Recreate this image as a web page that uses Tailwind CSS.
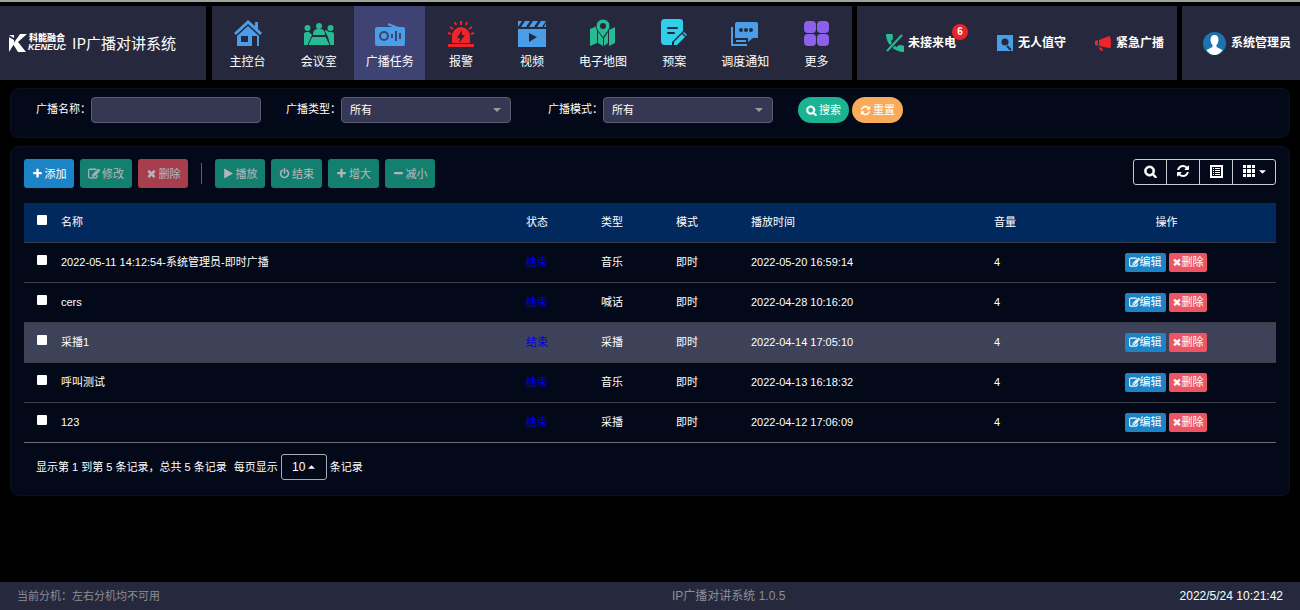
<!DOCTYPE html>
<html lang="zh-CN">
<head>
<meta charset="utf-8">
<title>IP广播对讲系统</title>
<script src="https://cdn.jsdelivr.net/npm/@tailwindcss/browser@4"></script>
</head>
<body class="flex min-h-screen flex-col border-t-2 border-[#9aa5a3] bg-black font-['Liberation_Sans','Noto_Sans_CJK_SC',sans-serif] text-[11px] leading-4 text-white">

<svg class="hidden" aria-hidden="true">
  <symbol id="search" viewBox="0 0 1792 1792"><path d="M1216 832q0-185-131.5-316.5t-316.5-131.5-316.5 131.5-131.5 316.5 131.5 316.5 316.5 131.5 316.5-131.5 131.5-316.5zm512 832q0 52-38 90t-90 38q-54 0-90-38l-343-342q-179 124-399 124-143 0-273.5-55.5t-225-150-150-225-55.5-273.5 55.5-273.5 150-225 225-150 273.5-55.5 273.5 55.5 225 150 150 225 55.5 273.5q0 220-124 399l343 343q37 37 37 90z" stroke="currentColor" stroke-width="90"/></symbol>
  <symbol id="plus" viewBox="0 0 1792 1792"><path d="M1600 736v192q0 40-28 68t-68 28h-416v416q0 40-28 68t-68 28h-192q-40 0-68-28t-28-68v-416h-416q-40 0-68-28t-28-68v-192q0-40 28-68t68-28h416v-416q0-40 28-68t68-28h192q40 0 68 28t28 68v416h416q40 0 68 28t28 68z"/></symbol>
  <symbol id="minus" viewBox="0 0 1792 1792"><path d="M1600 736v192q0 40-28 68t-68 28h-1216q-40 0-68-28t-28-68v-192q0-40 28-68t68-28h1216q40 0 68 28t28 68z"/></symbol>
  <symbol id="times" viewBox="0 0 1792 1792"><path d="M1490 1322q0 40-28 68l-136 136q-28 28-68 28t-68-28l-294-294-294 294q-28 28-68 28t-68-28l-136-136q-28-28-28-68t28-68l294-294-294-294q-28-28-28-68t28-68l136-136q28-28 68-28t68 28l294 294 294-294q28-28 68-28t68 28l136 136q28 28 28 68t-28 68l-294 294 294 294q28 28 28 68z" stroke="currentColor" stroke-width="90"/></symbol>
  <symbol id="refresh" viewBox="0 0 1792 1792"><path d="M1639 1056q0 5-1 7-64 268-268 434.5t-478 166.5q-146 0-282.5-55t-243.5-157l-129 129q-19 19-45 19t-45-19-19-45v-448q0-26 19-45t45-19h448q26 0 45 19t19 45-19 45l-137 137q71 66 161 102t187 36q134 0 250-65t186-179q11-17 53-117 8-23 30-23h192q13 0 22.5 9.5t9.5 22.5zm25-800v448q0 26-19 45t-45 19h-448q-26 0-45-19t-19-45 19-45l138-138q-148-137-349-137-134 0-250 65t-186 179q-11 17-53 117-8 23-30 23h-199q-13 0-22.5-9.5t-9.5-22.5v-7q65-268 270-434.5t480-166.5q146 0 284 55.5t245 156.5l130-129q19-19 45-19t45 19 19 45z"/></symbol>
  <symbol id="play" viewBox="0 0 1792 1792"><path d="M1576 927l-1328 738q-23 13-39.5 3t-16.5-36v-1472q0-26 16.5-36t39.5 3l1328 738q23 13 23 31t-23 31z"/></symbol>
  <symbol id="power" viewBox="0 0 1792 1792"><path d="M1664 896q0 156-61 298t-164 245-245 164-298 61-298-61-245-164-164-245-61-298q0-182 80.5-343t226.5-270q43-32 95.5-25t83.5 50q32 42 24.5 94.5t-49.5 84.5q-98 74-151.5 181t-53.5 228q0 104 40.5 198.5t109.5 163.5 163.5 109.5 198.5 40.5 198.5-40.5 163.5-109.5 109.5-163.5 40.5-198.5q0-121-53.5-228t-151.5-181q-42-32-49.5-84.5t24.5-94.5q31-43 84-50t95 25q146 109 226.5 270t80.5 343zm-640-768v640q0 52-38 90t-90 38-90-38-38-90v-640q0-52 38-90t90-38 90 38 38 90z"/></symbol>
  <symbol id="edit" viewBox="0 0 1792 1792"><path d="M888 1184l116-116-152-152-116 116v56h96v96h56zm440-720q-16-16-33 1l-350 350q-17 17-1 33t33-1l350-350q17-17 1-33zm80 594v190q0 119-84.5 203.5t-203.5 84.5h-832q-119 0-203.5-84.5t-84.5-203.5v-832q0-119 84.5-203.5t203.5-84.5h832q63 0 117 25 15 7 18 23 3 17-9 29l-49 49q-14 14-32 8-23-6-45-6h-832q-66 0-113 47t-47 113v832q0 66 47 113t113 47h832q66 0 113-47t47-113v-126q0-13 9-22l64-64q15-15 35-7t20 29zm-96-738l288 288-672 672h-288v-288zm444 132l-92 92-288-288 92-92q28-28 68-28t68 28l152 152q28 28 28 68t-28 68z" stroke="currentColor" stroke-width="70"/></symbol>
  <symbol id="down" viewBox="0 0 8 4"><path d="M0 0h8L4 4z"/></symbol>
</svg>

<header class="mt-1 flex h-[74px] gap-[5px]">
  <div class="mr-px flex w-[206px] shrink-0 items-center bg-[#26283d] pl-[9px]">
    <svg class="h-[18px] w-[18px] shrink-0" viewBox="0 0 18 18" fill="#fff"><path d="M0 1h5v3zM0 3l5 3v4l-5 8zM11 0h7L9 8l8 10H9L4 10z"/></svg>
    <div class="flex w-[40px] flex-col items-center">
      <span class="text-[9px] leading-[9px] font-black whitespace-nowrap">科能融合</span>
      <span class="text-[9px] leading-[9px] font-bold whitespace-nowrap italic">KENEUC</span>
    </div>
    <h1 class="ml-[5px] font-['Noto_Sans_CJK_SC',sans-serif] text-[15px] leading-4 whitespace-nowrap">IP广播对讲系统</h1>
  </div>

  <nav class="grid w-[640px] shrink-0 grid-cols-9 bg-[#26283d] text-center text-[12px]">
    <a href="#" class="flex flex-col items-center pt-3">
      <svg class="h-8 w-8" viewBox="0 0 32 32" fill="#4a9ee8"><path d="M16 2L2 15l2 2L16 6l12 11 2-2-4-4V4h-3v4z"/><path d="M16 8L5 18v10h15V18h5v10h2V18zM9 18h7v6H9z" fill-rule="evenodd"/></svg>
      <span class="mt-1">主控台</span></a>
    <a href="#" class="flex flex-col items-center pt-3">
      <svg class="h-8 w-8" viewBox="0 0 32 32" fill="#27bb94"><circle cx="16" cy="8" r="3"/><path d="M10 17c0-5 2-6 6-6s6 1 6 6z"/><circle cx="4.500" cy="10" r="3"/><circle cx="27.500" cy="10" r="3"/><path d="M1 27V16q0-2 3-2h2l3 3v2L6 27zM31 27V16q0-2-3-2h-2l-3-2-1 1 3 6 2 8zM10 18h12l5 9H5z"/><path d="M10 18.500h12M9 18l-4 9M23 18l4 9" stroke="#26283d"/></svg>
      <span class="mt-1">会议室</span></a>
    <a href="#" aria-current="page" class="flex flex-col items-center bg-[#3e4374] pt-3">
      <svg class="h-8 w-8" viewBox="0 0 32 32"><path d="M3 9h26q2 0 2 2v15q0 2-2 2H3q-2 0-2-2V11q0-2 2-2z" fill="#4a9ee8"/><path d="M14 6l10 4" stroke="#4a9ee8" stroke-width="2"/><g fill="none" stroke="#3e4374" stroke-width="2"><circle cx="10" cy="18" r="4"/><path d="M18 16v4M22 13v10M26 15v6"/></g></svg>
      <span class="mt-1">广播任务</span></a>
    <a href="#" class="flex flex-col items-center pt-3">
      <svg class="h-8 w-8" viewBox="0 0 32 32"><path d="M3 26h26v3H3zM7 25v-7a9 9 0 0 1 18 0v7z" fill="#eb2529"/><path d="M17 12l-5 8h3l-1 5 6-8h-3z" fill="#26283d"/><path d="M16 3v4M10 4l1 3M22 4l-1 3M5 9l3 2M27 9l-3 2M3 15l3 1M29 15l-3 1" stroke="#eb2529" stroke-width="2"/></svg>
      <span class="mt-1">报警</span></a>
    <a href="#" class="flex flex-col items-center pt-3">
      <svg class="h-8 w-8" viewBox="0 0 32 32" fill="#4a9ee8"><path d="M2 3h4L2 9zM9 3h5l-4 6H5zM17 3h5l-4 6h-5zM25 3h5l-4 6h-5zM30 5v4h-2zM2 11h28v18H2z"/><path d="M13 15v9l8-5z" fill="#26283d"/></svg>
      <span class="mt-1">视频</span></a>
    <a href="#" class="flex flex-col items-center pt-3">
      <svg class="h-8 w-8" viewBox="0 0 32 32" fill="#27bb94"><path d="M3 11l7-3v17l-7 3zM11 12l5 8v8l-5-3zM17 20l4-6v11l-4 3zM22 12l6-3v16l-6 3z"/><path d="M16 1a7 7 0 0 1 7 7c0 4-4 7-7 12C13 15 9 12 9 8a7 7 0 0 1 7-7z" stroke="#26283d"/><circle cx="16" cy="8" r="3" fill="#26283d"/></svg>
      <span class="mt-1">电子地图</span></a>
    <a href="#" class="flex flex-col items-center pt-3">
      <svg class="h-8 w-8" viewBox="0 0 32 32"><path d="M7 1h15q3 0 3 3v9L14 24v3H7q-4 0-4-4V5q0-4 4-4z" fill="#30d0eb"/><path d="M10 10h9M10 15h6" stroke="#26283d" stroke-width="2" stroke-linecap="round"/><path d="M16 24l8-8 3 3-8 8h-3zM25 15l1-1 3 3-1 1z" fill="#30d0eb"/></svg>
      <span class="mt-1">预案</span></a>
    <a href="#" class="flex flex-col items-center pt-3">
      <svg class="h-8 w-8" viewBox="0 0 32 32" fill="#4a9ee8"><path d="M8 4h19q2 0 2 2v14h-5l-5 4v-4H6V6q0-2 2-2z"/><path d="M3 9v18h15" fill="none" stroke="#4a9ee8" stroke-width="2"/><path d="M7 23h10" stroke="#4a9ee8" stroke-width="2"/><g fill="#26283d"><circle cx="12" cy="12" r="2"/><circle cx="17" cy="12" r="2"/><circle cx="22" cy="12" r="2"/></g></svg>
      <span class="mt-1">调度通知</span></a>
    <a href="#" class="flex flex-col items-center pt-3">
      <svg class="h-8 w-8" viewBox="0 0 32 32" fill="#8d60ec"><rect x="4" y="3" width="12" height="12" rx="4"/><rect x="17" y="3" width="12" height="12" rx="4"/><rect x="4" y="16" width="12" height="12" rx="4"/><rect x="17" y="16" width="12" height="12" rx="4"/></svg>
      <span class="mt-1">更多</span></a>
  </nav>

  <div class="flex w-[320px] shrink-0 items-center gap-7 bg-[#26283d] pl-[29px] text-[12px] font-bold whitespace-nowrap">
    <a href="#" class="relative flex items-center gap-1 pr-3">
      <svg class="h-[18px] w-[18px]" viewBox="3 3 18 18" fill="#27bb94"><path d="M20 14.500l-4-.6-2.300 2.200c-2.500-1.300-4.500-3.300-5.800-5.800L10 8 9.500 3H3c0 10 8 18 18 18v-6z"/><path d="M19 4L4 20" stroke="#26283d" stroke-width="4"/><path d="M19 4L4 20" stroke="#27bb94" stroke-width="2"/></svg>
      <span>未接来电</span>
      <span class="absolute -top-[10px] right-0 flex h-4 w-4 items-center justify-center rounded-full bg-[#e8242a] text-[10px]">6</span>
    </a>
    <a href="#" class="flex items-center gap-1">
      <svg class="h-[18px] w-[18px]" viewBox="0 0 18 18"><path d="M1 1h16v16H1z" fill="#4a9ee8"/><circle cx="9" cy="8" r="3.500" fill="#26283d"/><path d="M11 12l4 4" stroke="#26283d" stroke-width="2"/></svg>
      <span>无人值守</span></a>
    <a href="#" class="flex items-center gap-1">
      <svg class="h-[18px] w-[18px]" viewBox="0 0 18 18" fill="#eb2529"><path d="M5 6l10-4q2 0 2 7t-2 5L5 12zM1 7l3-1v6l-3-1zM4 13l4 1 1 3H7z"/></svg>
      <span>紧急广播</span></a>
  </div>

  <a href="#" class="flex grow items-center gap-[5px] bg-[#26283d] pl-[21px] text-[12px] font-bold whitespace-nowrap">
    <svg class="h-[23px] w-[23px] shrink-0" viewBox="0 0 23 23"><circle cx="11.500" cy="11.500" r="11.500" fill="#1c73ad"/><path d="M11.500 3q4 0 4 5 0 3-2 5v2l6 3q-3 5-8 5t-8-5l6-3v-2q-2-2-2-5 0-5 4-5z" fill="#fff"/></svg>
    <span>系统管理员</span></a>
</header>

<main class="flex grow flex-col gap-2 px-[10px] pt-2">
  <form class="flex items-start rounded-lg border border-[#0e1119] bg-[#030918] px-[25px] pt-2 pb-[14px]">
    <label for="name" class="w-[55px] pt-1">广播名称：</label>
    <input id="name" type="text" class="mr-[25px] h-[26px] w-[170px] rounded border border-[#5b5d70] bg-[#363853] px-2">
    <label for="type" class="w-[55px] pt-1">广播类型：</label>
    <div class="relative mr-[37px]">
      <select id="type" class="h-[26px] w-[170px] appearance-none rounded border border-[#5b5d70] bg-[#363853] px-2"><option>所有</option></select>
      <svg class="pointer-events-none absolute top-[11px] right-[10px] h-[4px] w-[8px]" fill="#999"><use href="#down"/></svg>
    </div>
    <label for="mode" class="w-[55px] pt-1">广播模式：</label>
    <div class="relative mr-[25px]">
      <select id="mode" class="h-[26px] w-[170px] appearance-none rounded border border-[#5b5d70] bg-[#363853] px-2"><option>所有</option></select>
      <svg class="pointer-events-none absolute top-[11px] right-[10px] h-[4px] w-[8px]" fill="#999"><use href="#down"/></svg>
    </div>
    <div class="flex gap-[3px]">
      <button type="button" class="flex h-[26px] w-[51px] items-center justify-center gap-[2px] rounded-full bg-[#1ab394]"><svg class="h-[11px] w-[11px] fill-current"><use href="#search"/></svg>搜索</button>
      <button type="button" class="flex h-[26px] w-[51px] items-center justify-center gap-[2px] rounded-full bg-[#f8ac59]"><svg class="h-[11px] w-[11px] fill-current"><use href="#refresh"/></svg>重置</button>
    </div>
  </form>

  <section class="rounded-lg border border-[#0e1119] bg-[#030918] px-[13px] pt-3 pb-[15px]">
    <div class="flex h-[44px] items-start">
      <div class="flex gap-[6px]">
        <button class="flex h-[29px] w-[50px] items-center justify-center gap-[2px] rounded-[3px] bg-[#1c84c6]"><svg class="h-[11px] w-[11px] fill-current"><use href="#plus"/></svg>添加</button>
        <button disabled class="flex h-[29px] w-[52px] items-center justify-center gap-[2px] rounded-[3px] bg-[#1ab394] opacity-70"><svg class="h-[12px] w-[12px] fill-current"><use href="#edit"/></svg>修改</button>
        <button disabled class="flex h-[29px] w-[50px] items-center justify-center gap-[2px] rounded-[3px] bg-[#ed5565] opacity-70"><svg class="h-[11px] w-[11px] fill-current"><use href="#times"/></svg>删除</button>
      </div>
      <div class="mx-[13px] mt-1 h-[21px] w-px bg-[#5c5f68]"></div>
      <div class="flex gap-[6px]">
        <button disabled class="flex h-[29px] w-[50px] items-center justify-center gap-[2px] rounded-[3px] bg-[#1ab394] opacity-70"><svg class="h-[11px] w-[11px] fill-current"><use href="#play"/></svg>播放</button>
        <button disabled class="flex h-[29px] w-[51px] items-center justify-center gap-[2px] rounded-[3px] bg-[#1ab394] opacity-70"><svg class="h-[11px] w-[11px] fill-current"><use href="#power"/></svg>结束</button>
        <button disabled class="flex h-[29px] w-[51px] items-center justify-center gap-[2px] rounded-[3px] bg-[#1ab394] opacity-70"><svg class="h-[11px] w-[11px] fill-current"><use href="#plus"/></svg>增大</button>
        <button disabled class="flex h-[29px] w-[50px] items-center justify-center gap-[2px] rounded-[3px] bg-[#1ab394] opacity-70"><svg class="h-[11px] w-[11px] fill-current"><use href="#minus"/></svg>减小</button>
      </div>
      <div class="ml-auto flex h-[26px] divide-x divide-[#c8c9cc] rounded-[3px] border border-[#c8c9cc]">
        <button aria-label="搜索" class="flex w-[33px] items-center justify-center pb-[2px]"><svg class="h-[13px] w-[13px] fill-current"><use href="#search"/></svg></button>
        <button aria-label="刷新" class="flex w-[33px] items-center justify-center pb-[2px]"><svg class="h-[14px] w-[14px] fill-current"><use href="#refresh"/></svg></button>
        <button aria-label="切换视图" class="flex w-[33px] items-center justify-center pb-[2px]"><svg class="h-[13px] w-[13px]" viewBox="0 0 13 13" fill="none" stroke="#fff"><path d="M1 1h11v11H1z" stroke-width="2"/><path d="M3 3.500h1M5 3.500h5M3 5.500h1M5 5.500h5M3 7.500h1M5 7.500h5M3 9.500h1M5 9.500h5"/></svg></button>
        <button aria-label="列" class="flex w-[42px] items-center justify-center gap-1 pb-[2px]"><svg class="h-[12px] w-[12px]" viewBox="0 0 12 12" fill="#fff"><path d="M0 0h3v3H0zM4 0h4v3H4zM9 0h3v3H9zM0 4h3v4H0zM4 4h4v4H4zM9 4h3v4H9zM0 9h3v3H0zM4 9h4v3H4zM9 9h3v3H9z"/></svg><svg class="mt-[2px] h-[4px] w-[7px] fill-current"><use href="#down"/></svg></button>
      </div>
    </div>

    <table class="w-full table-fixed border-collapse text-left">
      <colgroup><col class="w-[29px]"><col><col class="w-[75px]"><col class="w-[75px]"><col class="w-[75px]"><col class="w-[243px]"><col class="w-[71px]"><col class="w-[219px]"></colgroup>
      <thead>
        <tr class="h-[39px] border-b border-[#3a3d47] bg-[#02295e]">
          <th class="pl-[13px]"><input type="checkbox" aria-label="全选" class="mb-1 block h-[10px] w-[10px] appearance-none rounded-[1px] bg-white"></th>
          <th class="px-2 font-normal">名称</th><th class="px-2 font-normal">状态</th><th class="px-2 font-normal">类型</th><th class="px-2 font-normal">模式</th><th class="px-2 font-normal">播放时间</th><th class="px-2 font-normal">音量</th><th class="text-center font-normal">操作</th>
        </tr>
      </thead>
      <tbody id="rows"></tbody>
    </table>

    <div class="flex items-center pt-[11px] pl-[12px]">
      <span>显示第 1 到第 5 条记录，总共 5 条记录</span>
      <span class="ml-[7px]">每页显示</span>
      <button class="mx-[3px] flex h-[26px] w-[46px] items-center justify-center gap-[3px] rounded-[3px] border border-[#a9abb0] text-[12px]">10<svg class="h-[4px] w-[7px] rotate-180 fill-current"><use href="#down"/></svg></button>
      <span>条记录</span>
    </div>
  </section>
</main>

<footer class="flex h-[28px] items-center bg-[#26283d] px-[17px] text-[#8d8e98]">
  <span class="basis-[655px]">当前分机：左右分机均不可用</span>
  <span class="text-[12px]">IP广播对讲系统 1.0.5</span>
  <time class="ml-auto text-[12px] text-white">2022/5/24 10:21:42</time>
</footer>

<template id="row">
  <tr class="h-[40px] border-b border-[#3a3d47]">
    <td class="pl-[13px]"><input type="checkbox" aria-label="选择" class="mb-1 block h-[10px] w-[10px] appearance-none rounded-[1px] bg-white"></td>
    <td class="px-2" data-f></td><td class="px-2 text-[#0000e0]">结束</td><td class="px-2" data-f></td><td class="px-2">即时</td><td class="px-2" data-f></td><td class="px-2">4</td>
    <td class="pr-[2px]"><div class="flex justify-center gap-[3px]">
      <button class="flex h-[19px] w-[41px] items-center justify-center rounded-[2px] bg-[#1c84c6]"><svg class="h-[11px] w-[11px] fill-current"><use href="#edit"/></svg>编辑</button>
      <button class="flex h-[19px] w-[38px] items-center justify-center rounded-[2px] bg-[#ed5565]"><svg class="h-[10px] w-[10px] fill-current"><use href="#times"/></svg>删除</button>
    </div></td>
  </tr>
</template>
<script>
  const tasks = [
    ['2022-05-11 14:12:54-系统管理员-即时广播', '音乐', '2022-05-20 16:59:14'],
    ['cers', '喊话', '2022-04-28 10:16:20'],
    ['采播1', '采播', '2022-04-14 17:05:10'],
    ['呼叫测试', '音乐', '2022-04-13 16:18:32'],
    ['123', '采播', '2022-04-12 17:06:09'],
  ];
  const tpl = document.getElementById('row');
  tasks.forEach((task, i) => {
    const row = tpl.content.cloneNode(true);
    row.querySelectorAll('[data-f]').forEach((cell, k) => { cell.textContent = task[k]; });
    if (i === 2) row.querySelector('tr').classList.add('bg-[#3d4259]');
    if (i === tasks.length - 1) row.querySelector('tr').classList.replace('border-[#3a3d47]', 'border-[#6a6d75]');
    document.getElementById('rows').append(row);
  });
</script>
</body>
</html>
